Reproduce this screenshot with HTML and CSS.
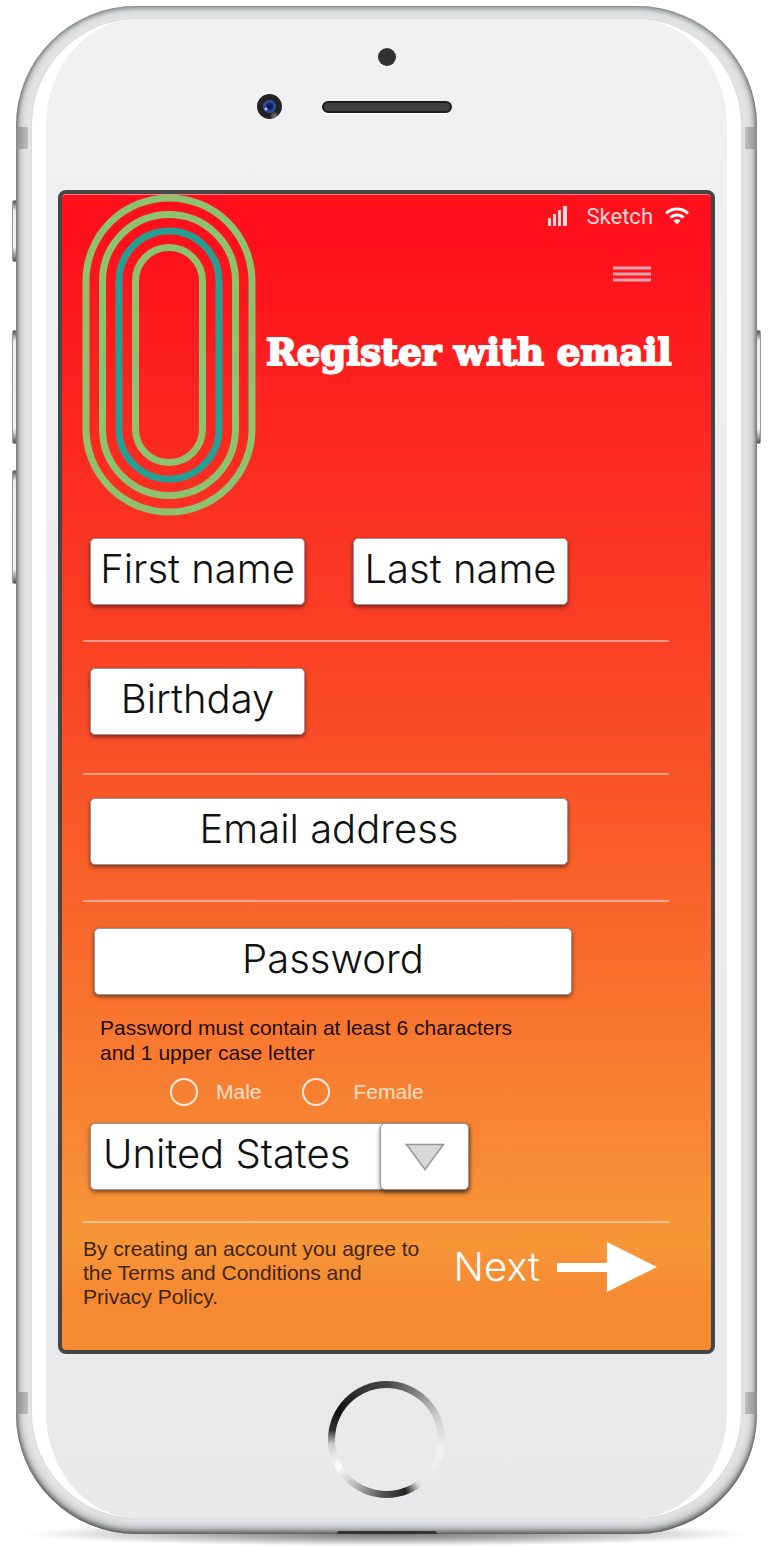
FILE: index.html
```html
<!DOCTYPE html>
<html lang="en">
<head>
<meta charset="utf-8">
<meta name="viewport" content="width=device-width, initial-scale=1">
<title>Register with email</title>
<link rel="stylesheet" href="styles.css">
</head>
<body>
<div class="device">
  <span class="key key-mute"></span>
  <span class="key key-up"></span>
  <span class="key key-down"></span>
  <span class="key key-power"></span>
  <div class="face">
    <div class="sensors">
      <span class="proximity"></span>
      <div class="speaker-row">
        <span class="camera"></span>
        <span class="speaker"></span>
      </div>
    </div>
    <main class="screen">
      <header class="header">
        <svg class="logo" viewBox="0 0 174 322" fill="none" stroke="#8dc26f" stroke-width="7" aria-hidden="true">
          <rect x="4" y="4" width="166" height="314" rx="83"/>
          <rect x="20.5" y="20.5" width="133" height="281" rx="66.5"/>
          <rect x="37" y="37" width="100" height="248" rx="50" stroke="#259f93"/>
          <rect x="53.500" y="53.500" width="67" height="215" rx="33.500"/>
        </svg>
        <div class="header-main">
          <div class="status">
            <svg class="signal" viewBox="0 0 20 20" fill="#ffd9dc" aria-hidden="true">
              <rect x="0" y="12" width="3" height="8"/><rect x="5" y="8" width="3" height="12"/><rect x="10" y="4" width="3" height="16"/><rect x="15" y="0" width="4" height="20"/>
            </svg>
            <span class="carrier">Sketch</span>
            <svg class="wifi" viewBox="0 0 24 18" aria-hidden="true">
              <path d="M1 6.500C7 .5 17 .5 23 6.500M5.500 10.500C9 7 15 7 18.500 10.500" fill="none" stroke="#fff" stroke-width="3"/>
              <path d="M8.500 13.500C10.500 11.700 13.500 11.700 15.500 13.500L12 17.500Z" fill="#fff"/>
            </svg>
          </div>
          <button class="menu" type="button" aria-label="Menu">
            <svg viewBox="0 0 38 16" aria-hidden="true"><path d="M0 2H38M0 8H38M0 14H38" stroke="#dca4ae" stroke-width="3"/></svg>
          </button>
          <h1 class="title">Register with email</h1>
        </div>
      </header>
      <form class="form">
        <div class="row">
          <input class="field half" type="text" placeholder="First name" aria-label="First name">
          <input class="field half" type="text" placeholder="Last name" aria-label="Last name">
        </div>
        <div class="row row-birthday">
          <input class="field half" type="text" placeholder="Birthday" aria-label="Birthday">
        </div>
        <div class="row row-email">
          <input class="field full" type="email" placeholder="Email address" aria-label="Email address">
        </div>
        <div class="row row-account">
          <input class="field full field-password" type="password" placeholder="Password" aria-label="Password" aria-describedby="hint">
          <p class="hint" id="hint">Password must contain at least 6 characters and 1 upper case letter</p>
          <div class="genders">
            <label class="gender"><input class="radio" type="radio" name="gender">Male</label>
            <label class="gender gender-wide"><input class="radio" type="radio" name="gender">Female</label>
          </div>
          <div class="country">
            <select class="field country-list" aria-label="Country"><option>United States</option></select>
            <span class="country-arrow"><svg viewBox="0 0 40 28" aria-hidden="true"><path d="M1.500 1.500H38.500L20 26.500Z" fill="#d8d8d8" stroke="#979797" stroke-width="1.500"/></svg></span>
          </div>
        </div>
        <div class="footer">
          <p class="terms">By creating an account you agree to the Terms and Conditions and Privacy Policy.</p>
          <button class="next" type="submit">Next
            <svg viewBox="0 0 100 50" aria-hidden="true"><path d="M0 21H50V0L100 25L50 50V30H0Z" fill="#fff"/></svg>
          </button>
        </div>
      </form>
    </main>
    <div class="chin"><button class="home" type="button" aria-label="Home"></button></div>
  </div>
  <span class="band band-top"></span>
  <span class="band band-bottom"></span>
  <span class="port"></span>
</div>
</body>
</html>
```
FILE: styles.css
```css
* { box-sizing: border-box; }

body {
  margin: 0;
  padding: 6px 17px 12px 16px;
  background: #fff;
  font-family: "Liberation Sans", Arial, sans-serif;
  overflow-x: hidden;
}

button { border: 0; padding: 0; background: none; font: inherit; color: inherit; cursor: pointer; }
svg { display: block; }

.device {
  position: relative;
  padding: 13px 16px 16px;
  border-radius: 120px;
  background: #e2e3e4;
  box-shadow:
    inset 0 -2px 4px rgba(0, 0, 0, .35),
    inset 0 -5px 10px rgba(0, 0, 0, .3),
    inset 0 2px 4px rgba(0, 0, 0, .2),
    inset 0 0 8px 1px #979999;
}

.device::before {
  content: "";
  position: absolute;
  z-index: -1;
  left: 10px;
  right: 10px;
  bottom: -12px;
  height: 24px;
  background: radial-gradient(closest-side, #777, #aaa 45%, rgba(255, 255, 255, 0));
}

.face {
  border: solid #fff;
  border-width: 0 14px;
  border-radius: 106px;
  padding: 0 12px;
  background: linear-gradient(#f0f1f3, #e7e9eb);
  box-shadow: 0 0 2px #c9cbcd;
}

.sensors {
  height: 171px;
  padding-top: 29px;
  display: flex;
  flex-direction: column;
  align-items: center;
  gap: 28px;
}

.proximity { width: 18px; height: 18px; border-radius: 50%; background: #323234; }

.speaker-row {
  width: 100%;
  display: grid;
  grid-template-columns: 1fr 130px 1fr;
  align-items: center;
  column-gap: 40px;
}

.camera {
  justify-self: end;
  width: 25px;
  height: 25px;
  border-radius: 50%;
  background:
    radial-gradient(circle at 36% 60%, #9fc3ea 0 1px, transparent 2px),
    radial-gradient(circle at 70% 88%, #777 0, transparent 5px),
    radial-gradient(circle at 50% 50%, #0a1a50 0 2px, #2f4d9f 5px 6px, #202022 7px, #242426 11px);
}

.speaker {
  height: 12px;
  border: 2px solid #1d1d1e;
  border-radius: 6px;
  background: #3f3f40;
  box-shadow: 0 1px 1px #fff;
}

.screen {
  border: 4px solid #464646;
  border-radius: 8px;
  background: linear-gradient(#ff101b 0, #ff101b 4%, #fb2f22 26%, #f94f27 48%, #f8752f 71%, #f69437 89%, #f69637 91%, #f68a33 95%);
  box-shadow: inset 0 2px 0 -1px rgba(255, 255, 255, .45);
}

.header {
  display: flex;
  gap: 10px;
  padding: 0 22px 0 20px;
}

.logo { flex: none; width: 174px; height: 322px; }

.header-main {
  flex: 1;
  min-width: 0;
  display: flex;
  flex-direction: column;
  align-items: flex-end;
}

.status {
  display: flex;
  align-items: center;
  gap: 12px;
  height: 24px;
  margin-top: 10px;
  color: #ffd9dc;
  font-family: Roboto, sans-serif;
  font-size: 22px;
}

.signal { width: 20px; height: 20px; margin-right: 7px; }
.wifi { width: 24px; height: 18px; }

.menu { margin: 38px 38px 0 0; }
.menu svg { width: 38px; height: 16px; }

.title {
  align-self: flex-start;
  margin: 48px 0 0;
  color: #fff;
  font: bold 37px/44px "DejaVu Serif", serif;
  white-space: nowrap;
  -webkit-text-stroke: 2px #fff;
}

.form { padding: 0 42px 0 21px; }

.row {
  display: flex;
  gap: 48px;
  padding: 26px 0 35px 7px;
  border-bottom: 2px solid rgba(255, 255, 255, .45);
}

.row:first-child { padding-top: 22px; }
.row-birthday { padding-bottom: 38px; }
.row-email { padding-top: 23px; }
.row-account { display: block; padding-bottom: 31px; }

.field {
  height: 67px;
  padding: 0 8px 7px;
  border: 1px solid #979797;
  border-radius: 5px;
  background: #fff;
  box-shadow: 0 2px 4px rgba(0, 0, 0, .5);
  color: #111;
  font-family: Inter, "Liberation Sans", sans-serif;
  font-size: 40px;
  font-weight: 300;
  text-align: center;
}

.field::placeholder { color: #111; opacity: 1; }

.half { width: 215px; }
.full { width: 478px; }
.field-password { margin-left: 4px; }

.hint {
  max-width: 430px;
  margin: 20px 0 0 10px;
  color: #1d0d04;
  font-size: 21px;
  line-height: 25px;
}

.genders {
  display: flex;
  gap: 40px;
  margin: 13px 0 17px 80px;
}

.gender {
  display: flex;
  align-items: center;
  gap: 18px;
  color: #fde0cc;
  font-size: 21px;
  line-height: 28px;
}

.gender-wide { gap: 24px; }

.radio {
  appearance: none;
  width: 28px;
  height: 28px;
  margin: 0;
  border: 2px solid #fdeadf;
  border-radius: 50%;
}

.radio:checked { background: radial-gradient(#fff 6px, transparent 7px); }

.country { display: grid; grid-template-columns: 290px 89px; }

.country-list {
  grid-area: 1 / 1 / 2 / 3;
  appearance: none;
  padding-left: 12px;
  text-align: left;
}

.country-arrow {
  grid-area: 1 / 2;
  display: grid;
  place-items: center;
  border: 1px solid #979797;
  border-radius: 5px;
  background: #fff;
  box-shadow: 0 2px 4px rgba(0, 0, 0, .5);
  pointer-events: none;
}

.country-arrow svg { width: 40px; height: 28px; }

.footer {
  display: flex;
  justify-content: space-between;
  align-items: flex-start;
  padding: 14px 12px 41px 0;
}

.terms {
  width: 350px;
  margin: 0;
  color: #3f240d;
  font-size: 21px;
  line-height: 24px;
}

.next {
  display: flex;
  align-items: center;
  gap: 17px;
  margin-top: 5px;
  color: #fff;
  font-family: Inter, "Liberation Sans", sans-serif;
  font-size: 40px;
  font-weight: 300;
  line-height: 50px;
}

.next svg { width: 100px; height: 50px; }

.chin { height: 164px; padding-top: 27px; }

.home {
  display: block;
  position: relative;
  width: 117px;
  height: 117px;
  margin: 0 auto;
  border-radius: 50%;
  background: conic-gradient(#444 0deg, #888 35deg, #ccc 65deg, #f2f2f2 100deg, #e8e8e8 140deg, #ddd 145deg, #222 160deg, #555 185deg, #bbb 215deg, #fff 240deg, #ccc 265deg, #333 280deg, #111 300deg, #333 330deg, #444 360deg);
}

.home::before {
  content: "";
  position: absolute;
  inset: 7px;
  border-radius: 50%;
  background: #e8eaec;
}

.key {
  position: absolute;
  z-index: -1;
  left: -4px;
  width: 7px;
  height: 114px;
  border: 1px solid #999;
  border-radius: 2px;
  background: linear-gradient(#555, #eee 10px, #f4f4f4 calc(100% - 14px), #555);
}

.key-mute { top: 194px; height: 62px; }
.key-up { top: 324px; }
.key-down { top: 464px; }
.key-power { top: 324px; left: auto; right: -4px; }

.band {
  position: absolute;
  left: 0;
  right: 0;
  height: 22px;
  background:
    linear-gradient(90deg, #8a8c8e, #bfc1c3) left / 12px 100% no-repeat,
    linear-gradient(270deg, #8a8c8e, #bfc1c3) right / 12px 100% no-repeat;
  pointer-events: none;
}

.band-top { top: 121px; }
.band-bottom { bottom: 120px; }

.port {
  position: absolute;
  bottom: 0;
  left: calc(50% - 50px);
  width: 100px;
  height: 3px;
  border-radius: 3px 3px 0 0;
  background: #333;
}
```
